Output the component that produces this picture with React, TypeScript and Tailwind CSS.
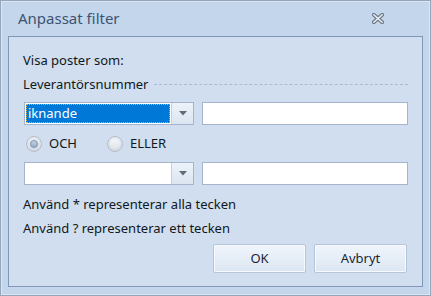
import React from "react";

const font = { fontFamily: '"Segoe UI", "Noto Sans", "Open Sans", sans-serif' };

function Arrow() {
  return (
    <svg width="8" height="5" viewBox="0 0 8 5">
      <path d="M0 0 H8 L4 4.5 Z" fill="#5f6b7a" />
    </svg>
  );
}

function Combo({ value }: { value?: string }) {
  return (
    <div className="flex h-[23px] w-[170px] border border-[#a3b4cc] bg-white">
      <div className="flex flex-1 items-center p-px">
        {value ? (
          <div className="flex h-full w-full items-center border border-dotted border-[#d9b24a] bg-[#0078d7] px-px text-[13px] leading-none text-white">
            {value}
          </div>
        ) : null}
      </div>
      <div className="flex w-[22px] items-center justify-center border-l border-[#c4d1e2] bg-gradient-to-b from-[#eef3fa] to-[#dbe5f1]">
        <Arrow />
      </div>
    </div>
  );
}

function Input() {
  return <div className="h-[23px] w-[206px] border border-[#a3b4cc] bg-white" />;
}

function Radio({ checked, label }: { checked?: boolean; label: string }) {
  return (
    <div className="flex w-[81px] items-center gap-[7px]">
      <div className="flex h-[16px] w-[16px] items-center justify-center rounded-full border border-[#b3bdc9] bg-gradient-to-b from-[#e9edf2] to-[#d2d9e2]">
        {checked ? (
          <div className="h-[8px] w-[8px] rounded-full border border-[#7d93ae] bg-gradient-to-b from-[#c5d3e4] to-[#98acc5]" />
        ) : (
          <div className="h-[10px] w-[10px] rounded-full bg-gradient-to-b from-[#f3f5f8] to-[#dfe4ea]" />
        )}
      </div>
      <span className="text-[13px] text-[#101820]">{label}</span>
    </div>
  );
}

function Button({ children }: { children: React.ReactNode }) {
  return (
    <div className="flex h-[29px] w-[93px] items-center justify-center rounded-[2px] border border-[#b6c6da] bg-gradient-to-b from-[#f0f5fb] to-[#dce6f3] text-[13px] text-[#1b2838] shadow-[inset_0_0_0_1px_#f6f9fd]">
      {children}
    </div>
  );
}

export default function App() {
  return (
    <div
      style={font}
      className="flex h-[296px] w-[431px] flex-col border border-[#95a6bb] bg-[#c3d6ec] shadow-[inset_0_0_0_1px_#dbe6f3]"
    >
      <div className="flex h-[35px] items-center justify-between pl-[17px] pr-[46px]">
        <span className="text-[15px] text-[#3e5373]">Anpassat filter</span>
        <svg width="12" height="11" viewBox="0 0 12 11">
          <path
            d="M1.8 1.8 L10.2 9.2 M10.2 1.8 L1.8 9.2"
            stroke="#6f7b8a"
            strokeWidth="3.8"
            strokeLinecap="round"
          />
          <path
            d="M1.8 1.8 L10.2 9.2 M10.2 1.8 L1.8 9.2"
            stroke="#eef2f7"
            strokeWidth="1.4"
            strokeLinecap="round"
          />
        </svg>
      </div>
      <div className="mx-[7px] mb-[8px] flex flex-1 flex-col border border-[#8097b5] bg-[#d1deef] pl-[14px] pr-[14px] text-[13px] text-[#101820]">
        <div className="mt-[15px] h-[16px] leading-[16px]">Visa poster som:</div>
        <div className="mt-[8px] flex h-[16px] items-center gap-[5px] leading-[16px]">
          <span>Leverantörsnummer</span>
          <div className="flex-1 border-t border-dashed border-[#a9bbd2]" />
        </div>
        <div className="mt-[10px] flex gap-[8px] pl-px">
          <Combo value="iknande" />
          <Input />
        </div>
        <div className="mt-[11px] flex h-[16px] items-center pl-[3px]">
          <Radio checked label="OCH" />
          <Radio label="ELLER" />
        </div>
        <div className="mt-[10px] flex gap-[8px] pl-px">
          <Combo />
          <Input />
        </div>
        <div className="mt-[11px] h-[16px] leading-[16px]">Använd * representerar alla tecken</div>
        <div className="mt-[8px] h-[16px] leading-[16px]">Använd ? representerar ett tecken</div>
        <div className="mt-[8px] flex justify-end gap-[8px] pr-px">
          <Button>OK</Button>
          <Button>Avbryt</Button>
        </div>
      </div>
    </div>
  );
}
